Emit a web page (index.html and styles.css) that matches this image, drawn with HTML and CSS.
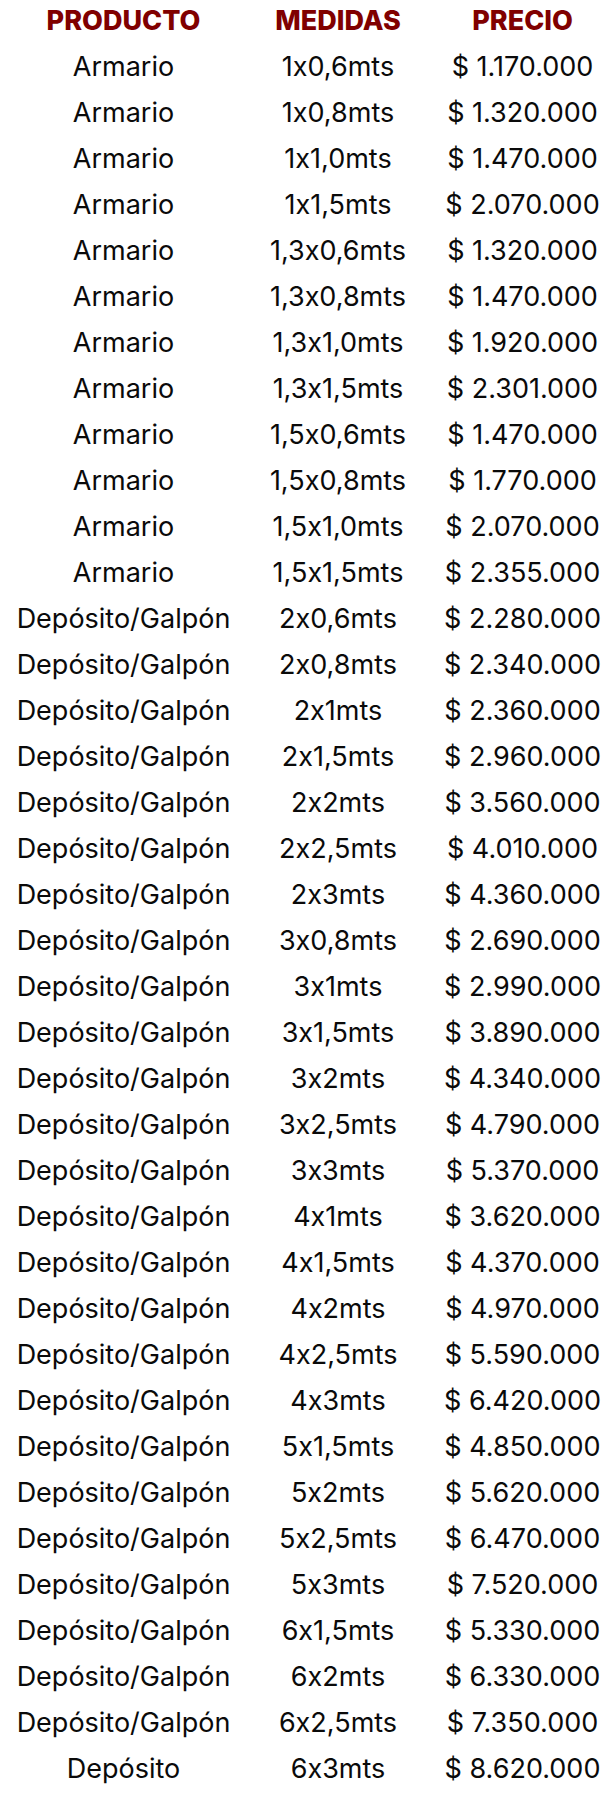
FILE: index.html
```html
<!DOCTYPE html>
<html lang="es">
<head>
<meta charset="utf-8">
<title>Precios</title>
<link rel="stylesheet" href="styles.css">
</head>
<body>
<div class="price-table">
  <div class="row head"><div>PRODUCTO</div><div>MEDIDAS</div><div>PRECIO</div></div>
  <div class="row"><div>Armario</div><div>1x0,6mts</div><div>$ 1.170.000</div></div>
  <div class="row"><div>Armario</div><div>1x0,8mts</div><div>$ 1.320.000</div></div>
  <div class="row"><div>Armario</div><div>1x1,0mts</div><div>$ 1.470.000</div></div>
  <div class="row"><div>Armario</div><div>1x1,5mts</div><div>$ 2.070.000</div></div>
  <div class="row"><div>Armario</div><div>1,3x0,6mts</div><div>$ 1.320.000</div></div>
  <div class="row"><div>Armario</div><div>1,3x0,8mts</div><div>$ 1.470.000</div></div>
  <div class="row"><div>Armario</div><div>1,3x1,0mts</div><div>$ 1.920.000</div></div>
  <div class="row"><div>Armario</div><div>1,3x1,5mts</div><div>$ 2.301.000</div></div>
  <div class="row"><div>Armario</div><div>1,5x0,6mts</div><div>$ 1.470.000</div></div>
  <div class="row"><div>Armario</div><div>1,5x0,8mts</div><div>$ 1.770.000</div></div>
  <div class="row"><div>Armario</div><div>1,5x1,0mts</div><div>$ 2.070.000</div></div>
  <div class="row"><div>Armario</div><div>1,5x1,5mts</div><div>$ 2.355.000</div></div>
  <div class="row"><div>Depósito/Galpón</div><div>2x0,6mts</div><div>$ 2.280.000</div></div>
  <div class="row"><div>Depósito/Galpón</div><div>2x0,8mts</div><div>$ 2.340.000</div></div>
  <div class="row"><div>Depósito/Galpón</div><div>2x1mts</div><div>$ 2.360.000</div></div>
  <div class="row"><div>Depósito/Galpón</div><div>2x1,5mts</div><div>$ 2.960.000</div></div>
  <div class="row"><div>Depósito/Galpón</div><div>2x2mts</div><div>$ 3.560.000</div></div>
  <div class="row"><div>Depósito/Galpón</div><div>2x2,5mts</div><div>$ 4.010.000</div></div>
  <div class="row"><div>Depósito/Galpón</div><div>2x3mts</div><div>$ 4.360.000</div></div>
  <div class="row"><div>Depósito/Galpón</div><div>3x0,8mts</div><div>$ 2.690.000</div></div>
  <div class="row"><div>Depósito/Galpón</div><div>3x1mts</div><div>$ 2.990.000</div></div>
  <div class="row"><div>Depósito/Galpón</div><div>3x1,5mts</div><div>$ 3.890.000</div></div>
  <div class="row"><div>Depósito/Galpón</div><div>3x2mts</div><div>$ 4.340.000</div></div>
  <div class="row"><div>Depósito/Galpón</div><div>3x2,5mts</div><div>$ 4.790.000</div></div>
  <div class="row"><div>Depósito/Galpón</div><div>3x3mts</div><div>$ 5.370.000</div></div>
  <div class="row"><div>Depósito/Galpón</div><div>4x1mts</div><div>$ 3.620.000</div></div>
  <div class="row"><div>Depósito/Galpón</div><div>4x1,5mts</div><div>$ 4.370.000</div></div>
  <div class="row"><div>Depósito/Galpón</div><div>4x2mts</div><div>$ 4.970.000</div></div>
  <div class="row"><div>Depósito/Galpón</div><div>4x2,5mts</div><div>$ 5.590.000</div></div>
  <div class="row"><div>Depósito/Galpón</div><div>4x3mts</div><div>$ 6.420.000</div></div>
  <div class="row"><div>Depósito/Galpón</div><div>5x1,5mts</div><div>$ 4.850.000</div></div>
  <div class="row"><div>Depósito/Galpón</div><div>5x2mts</div><div>$ 5.620.000</div></div>
  <div class="row"><div>Depósito/Galpón</div><div>5x2,5mts</div><div>$ 6.470.000</div></div>
  <div class="row"><div>Depósito/Galpón</div><div>5x3mts</div><div>$ 7.520.000</div></div>
  <div class="row"><div>Depósito/Galpón</div><div>6x1,5mts</div><div>$ 5.330.000</div></div>
  <div class="row"><div>Depósito/Galpón</div><div>6x2mts</div><div>$ 6.330.000</div></div>
  <div class="row"><div>Depósito/Galpón</div><div>6x2,5mts</div><div>$ 7.350.000</div></div>
  <div class="row"><div>Depósito</div><div>6x3mts</div><div>$ 8.620.000</div></div>
</div>
</body>
</html>
```

FILE: styles.css
```css
html, body {
  margin: 0;
  padding: 0;
  background: #ffffff;
}

body {
  font-family: Inter, "Noto Sans", sans-serif;
  color: #0a0a0a;
  font-variant-ligatures: no-contextual;
  font-feature-settings: "calt" 0;
}

.price-table {
  padding: 0 8px;
  margin-top: -2px;
}

.row {
  display: grid;
  grid-template-columns: 231px 198px 171px;
  font-size: 27px;
  line-height: 46px;
  text-align: center;
  white-space: nowrap;
}

.row.head {
  font-weight: 800;
  color: #800000;
}
```
